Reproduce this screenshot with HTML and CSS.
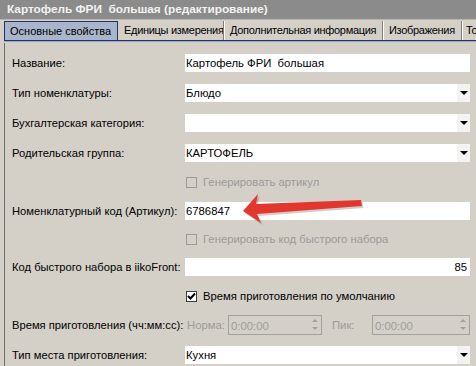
FILE: index.html
```html
<!DOCTYPE html>
<html lang="ru">

<head>
    <meta charset="UTF-8">
    <title>Картофель ФРИ большая (редактирование)</title>
    <link rel="stylesheet" href="styles.css">
</head>

<body>
    <div class="window">
        <div class="titlebar">Картофель ФРИ&nbsp; большая (редактирование)</div>

        <!-- Вкладки -->
        <div class="tabs">
            <div class="tab active tab-main">Основные свойства</div>
            <div class="tab tab-units">Единицы измерения</div>
            <div class="tab tab-extra">Дополнительная информация</div>
            <div class="tab tab-images">Изображения</div>
            <div class="tab tab-last">То</div>
        </div>

        <div class="panel">
            <div class="row">
                <div class="label">Название:</div>
                <div class="field">Картофель ФРИ&nbsp; большая</div>
            </div>
            <div class="row">
                <div class="label">Тип номенклатуры:</div>
                <div class="field combo">Блюдо<span class="drop"></span></div>
            </div>
            <div class="row">
                <div class="label">Бухгалтерская категория:</div>
                <div class="field combo"><span class="drop"></span></div>
            </div>
            <div class="row">
                <div class="label">Родительская группа:</div>
                <div class="field combo">КАРТОФЕЛЬ<span class="drop"></span></div>
            </div>
            <div class="row check-row">
                <div class="label"></div>
                <div class="check disabled"><span class="box"></span>Генерировать артикул</div>
            </div>
            <div class="row">
                <div class="label">Номенклатурный код (Артикул):</div>
                <div class="field">6786847</div>
            </div>
            <div class="row check-row second-check">
                <div class="label"></div>
                <div class="check disabled"><span class="box"></span>Генерировать код быстрого набора</div>
            </div>
            <div class="row">
                <div class="label">Код быстрого набора в iikoFront:</div>
                <div class="field number">85</div>
            </div>
            <div class="row check-row">
                <div class="label"></div>
                <div class="check"><span class="box checked">
                    <svg width="9" height="9" viewBox="0 0 9 9"><path d="M1 4 L3.5 6.5 L8 1.5" fill="none" stroke="#000" stroke-width="2"/></svg>
                </span>Время приготовления по умолчанию</div>
            </div>
            <div class="row">
                <div class="label">Время приготовления (чч:мм:сс):</div>
                <div class="times">
                    <span class="muted norma">Норма:</span>
                    <div class="spin norma-spin">0:00:00<span class="arrows"><i class="up"></i><i class="down"></i></span></div>
                    <span class="muted pik">Пик:</span>
                    <div class="spin pik-spin">0:00:00<span class="arrows"><i class="up"></i><i class="down"></i></span></div>
                </div>
            </div>
            <div class="row">
                <div class="label">Тип места приготовления:</div>
                <div class="field combo">Кухня<span class="drop"></span></div>
            </div>
        </div>

        <!-- Красная стрелка -->
        <svg class="pointer" width="476" height="366" viewBox="0 0 476 366">
            <path d="M243 211 L258 194 L256 204 L361 200 L362 206 L257 214 L261 223 Z" fill="#8a6a60" opacity="0.35" transform="translate(1.5 2)"/>
            <path d="M243 211 L258 194 L256 204 L361 200 L362 206 L257 214 L261 223 Z" fill="#e2372e"/>
        </svg>
    </div>
</body>

</html>
```

FILE: styles.css
```css
body {
    margin: 0;
    background-color: #d4d0c8;
    font-family: "Liberation Sans", Arial, sans-serif;
    font-size: 11px;
    color: #000;
}

.window {
    position: relative;
    width: 476px;
    height: 366px;
    overflow: hidden;
    background-color: #d4d0c8;
}

.titlebar {
    height: 19px;
    line-height: 19px;
    padding-left: 7px;
    background-color: #8b8b8b;
    border-bottom: 1px solid #b9b6b0;
    color: #f2f2f2;
    font-weight: bold;
    font-size: 11.8px;
    white-space: nowrap;
}

.tabs {
    display: flex;
    height: 19px;
    margin-left: 4px;
    padding-top: 1px;
    border-bottom: 1px solid #22345f;
    box-shadow: 0 1px 0 #9aa6c4;
    white-space: nowrap;
    overflow: hidden;
}

.tab {
    flex: none;
    box-sizing: border-box;
    padding-left: 5px;
    line-height: 19px;
    font-size: 11px;
    letter-spacing: -0.3px;
    border-right: 1px solid #7e7c78;
    box-shadow: 1px 0 0 #fff;
    margin-right: 1px;
    overflow: hidden;
}

.tab.active {
    background-color: #a9b5cc;
    border: 1px solid #22345f;
    border-bottom: none;
    box-shadow: none;
    line-height: 18px;
    padding-left: 5px;
    letter-spacing: 0;
}

.tab-main {
    width: 114px;
}

.tab-units {
    width: 105px;
}

.tab-extra {
    width: 158px;
}

.tab-images {
    width: 78px;
}

.tab-last {
    width: 14px;
    padding-left: 3px;
    border-right: none;
    box-shadow: none;
}

.panel {
    margin-top: 2px;
    margin-left: 4px;
    padding-top: 5px;
    border-left: 1px solid #6f6d69;
    height: 330px;
}

.row {
    display: flex;
    align-items: center;
    height: 30px;
}

.check-row {
    height: 28px;
}

.second-check {
    height: 26px;
}

.label {
    width: 180px;
    flex: none;
    padding-left: 7px;
    box-sizing: border-box;
    font-size: 11.2px;
    white-space: nowrap;
}

.field {
    position: relative;
    width: 285px;
    height: 18px;
    line-height: 18px;
    padding-left: 1px;
    box-sizing: border-box;
    background-color: #fff;
    font-size: 11.3px;
    white-space: nowrap;
}

.field.number {
    text-align: right;
    padding-right: 3px;
}

.drop {
    position: absolute;
    right: 0;
    top: 0;
    width: 13px;
    height: 18px;
    background-color: #f4f3f1;
}

.drop::after {
    content: "";
    position: absolute;
    left: 3px;
    top: 7px;
    border-left: 4px solid transparent;
    border-right: 4px solid transparent;
    border-top: 4px solid #000;
}

.check {
    display: flex;
    align-items: center;
    margin-left: 1px;
    font-size: 11.3px;
    white-space: nowrap;
}

.check.disabled {
    color: #9d9b97;
}

.box {
    display: inline-flex;
    align-items: center;
    justify-content: center;
    width: 9px;
    height: 9px;
    margin-right: 6px;
    border: 1px solid #9d9b97;
}

.box.checked {
    border-color: #3c3c3c;
    background-color: #fff;
}

.times {
    display: flex;
    align-items: center;
    font-size: 11.3px;
}

.muted {
    color: #9d9b97;
}

.norma {
    margin-left: 2px;
    width: 41px;
}

.pik {
    margin-left: 10px;
    width: 40px;
}

.spin {
    position: relative;
    height: 20px;
    line-height: 20px;
    padding-left: 2px;
    box-sizing: border-box;
    border: 1px solid #a3a19d;
    color: #9d9b97;
}

.norma-spin {
    width: 94px;
}

.pik-spin {
    width: 98px;
}

.arrows {
    position: absolute;
    right: 3px;
    top: 3px;
    display: flex;
    flex-direction: column;
    gap: 5px;
}

.arrows i {
    width: 0;
    height: 0;
    border-left: 3px solid transparent;
    border-right: 3px solid transparent;
}

.arrows .up {
    border-bottom: 3px solid #a3a19d;
}

.arrows .down {
    border-top: 3px solid #a3a19d;
}

.pointer {
    position: absolute;
    left: 0;
    top: 0;
    pointer-events: none;
}
```
